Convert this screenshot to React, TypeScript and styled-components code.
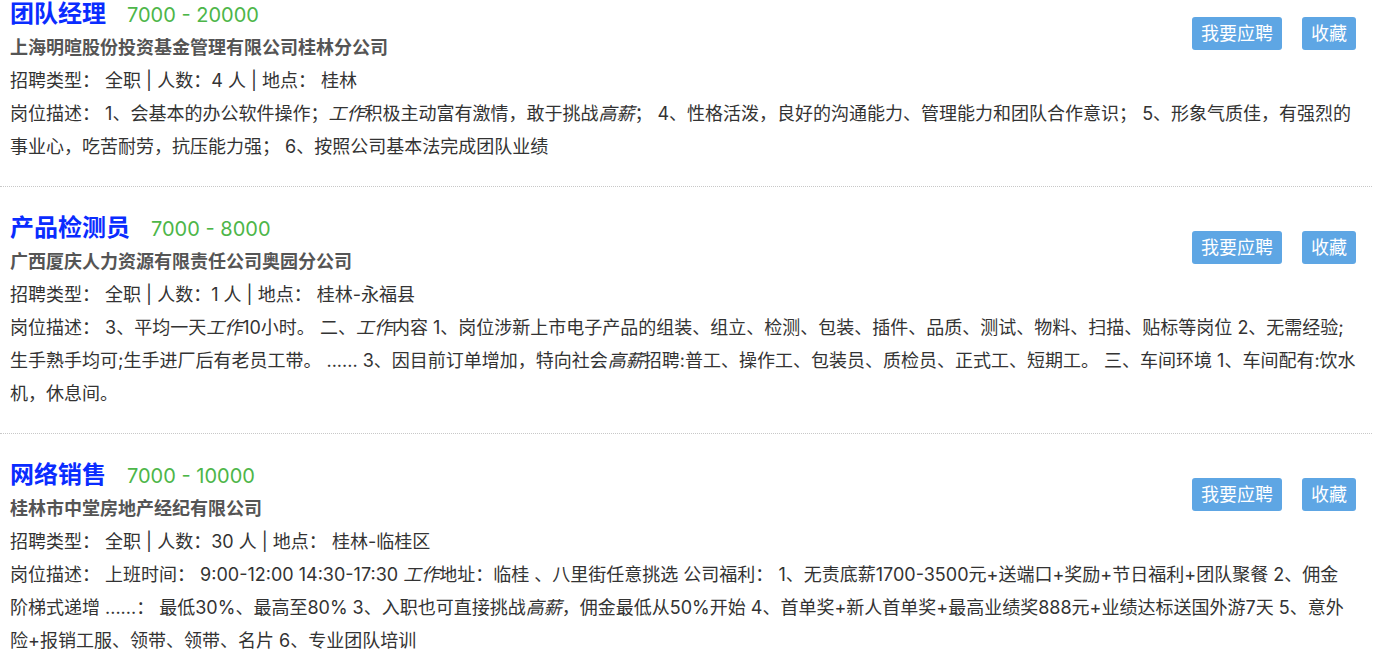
import React from 'react';
import styled, { createGlobalStyle } from 'styled-components';

const GlobalStyle = createGlobalStyle`
  body {
    margin: 0;
    background: #fff;
    font-family: Inter, "Noto Sans CJK SC", sans-serif;
    color: #333;
  }
`;

const List = styled.div`
  width: 1372px;
  margin-top: -27px;
`;

const Item = styled.div`
  padding: 24px 16px 23px 10px;
  border-top: 1px dotted #c8c8c8;

  &:first-child {
    border-top: none;
  }
`;

const Head = styled.div`
  display: flex;
  justify-content: space-between;
  align-items: flex-start;
`;

const TitleRow = styled.div`
  display: flex;
  align-items: baseline;
  height: 34px;
  line-height: 34px;
`;

const Title = styled.a`
  font-size: 24px;
  font-weight: bold;
  color: #0a2cff;
  text-decoration: none;
`;

const Salary = styled.span`
  font-size: 20px;
  color: #4db649;
  margin-left: 21px;
`;

const Company = styled.div`
  font-size: 18px;
  font-weight: bold;
  color: #555;
  line-height: 33px;
`;

const Actions = styled.div`
  display: flex;
  gap: 20px;
  margin-top: 20px;
`;

const Button = styled.button`
  height: 33px;
  padding: 0 9px;
  border: none;
  border-radius: 3px;
  background: #5ea6e4;
  color: #fff;
  font-family: inherit;
  font-size: 18px;
  line-height: 33px;
  cursor: pointer;
`;

const Line = styled.div`
  font-size: 18px;
  line-height: 33px;
  color: #333;

  em {
    font-style: italic;
  }
`;

type Job = {
  title: string;
  salary: string;
  company: string;
  count: string;
  place: string;
  desc: React.ReactNode;
};

const jobs: Job[] = [
  {
    title: '团队经理',
    salary: '7000 - 20000',
    company: '上海明暄股份投资基金管理有限公司桂林分公司',
    count: '4',
    place: '桂林',
    desc: (
      <>
        1、会基本的办公软件操作；<em>工作</em>积极主动富有激情，敢于挑战<em>高薪</em>； 4、性格活泼，良好的沟通能力、管理能力和团队合作意识； 5、形象气质佳，有强烈的事业心，吃苦耐劳，抗压能力强； 6、按照公司基本法完成团队业绩
      </>
    ),
  },
  {
    title: '产品检测员',
    salary: '7000 - 8000',
    company: '广西厦庆人力资源有限责任公司奥园分公司',
    count: '1',
    place: '桂林-永福县',
    desc: (
      <>
        3、平均一天<em>工作</em>10小时。 二、<em>工作</em>内容 1、岗位涉新上市电子产品的组装、组立、检测、包装、插件、品质、测试、物料、扫描、贴标等岗位 2、无需经验;生手熟手均可;生手进厂后有老员工带。 ...... 3、因目前订单增加，特向社会<em>高薪</em>招聘:普工、操作工、包装员、质检员、正式工、短期工。 三、车间环境 1、车间配有:饮水机，休息间。
      </>
    ),
  },
  {
    title: '网络销售',
    salary: '7000 - 10000',
    company: '桂林市中堂房地产经纪有限公司',
    count: '30',
    place: '桂林-临桂区',
    desc: (
      <>
        上班时间： 9:00-12:00 14:30-17:30 <em>工作</em>地址：临桂 、八里街任意挑选 公司福利： 1、无责底薪1700-3500元+送端口+奖励+节日福利+团队聚餐 2、佣金阶梯式递增 ......： 最低30%、最高至80% 3、入职也可直接挑战<em>高薪</em>，佣金最低从50%开始 4、首单奖+新人首单奖+最高业绩奖888元+业绩达标送国外游7天 5、意外险+报销工服、领带、领带、名片 6、专业团队培训
      </>
    ),
  },
];

const App: React.FC = () => {
  return (
    <>
      <GlobalStyle />
      <List>
        {jobs.map((job) => (
          <Item key={job.title}>
            <Head>
              <div>
                <TitleRow>
                  <Title href="#">{job.title}</Title>
                  <Salary>{job.salary}</Salary>
                </TitleRow>
                <Company>{job.company}</Company>
              </div>
              <Actions>
                <Button>我要应聘</Button>
                <Button>收藏</Button>
              </Actions>
            </Head>
            <Line>
              招聘类型： 全职 | 人数：{job.count} 人 | 地点： {job.place}
            </Line>
            <Line>岗位描述： {job.desc}</Line>
          </Item>
        ))}
      </List>
    </>
  );
};

export default App;
